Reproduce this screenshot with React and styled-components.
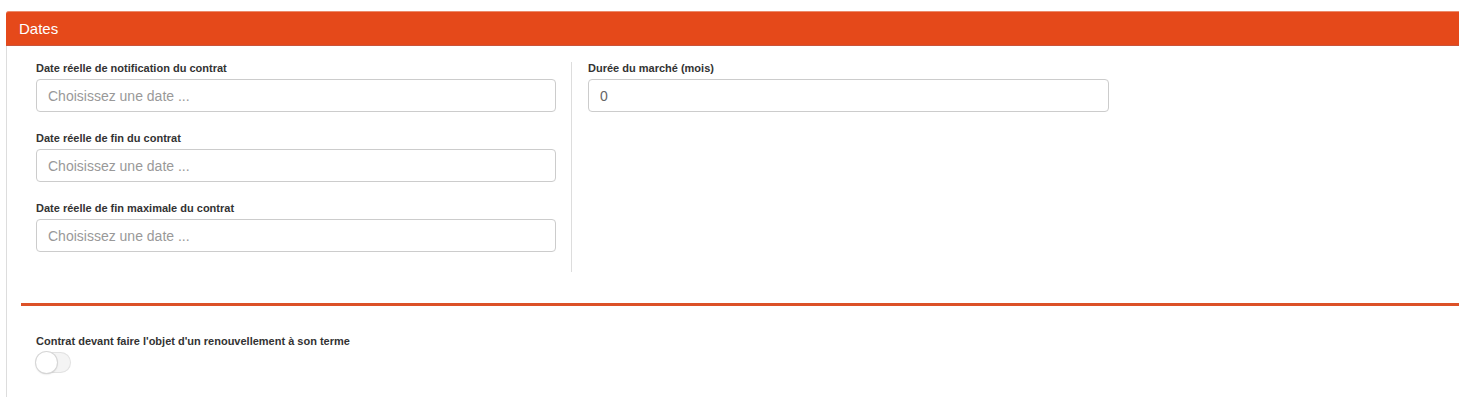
import styled, { createGlobalStyle } from 'styled-components';

const GlobalStyle = createGlobalStyle`
  html, body {
    margin: 0;
    padding: 0;
    background: #fff;
    overflow: hidden;
  }

  body {
    font-family: "Liberation Sans", Arial, sans-serif;
    color: #333;
  }
`;

const Page = styled.div`
  padding: 11px 0 0 6px;
  height: 397px;
  box-sizing: border-box;
`;

const Panel = styled.section`
  margin-right: -20px;
  height: 100%;
  border-left: 1px solid #ddd;
  border-top-left-radius: 3px;
  background: #fff;
`;

const Header = styled.header`
  height: 35px;
  display: flex;
  align-items: center;
  padding: 0 13px;
  margin-left: -1px;
  background: #e5491a;
  border-top: 1px solid #ec8a6a;
  border-bottom: 1px solid #c9543a;
  border-top-left-radius: 3px;
  box-sizing: border-box;
  color: #fff;
  font-size: 15px;
`;

const Body = styled.div`
  padding: 16px 0 0 14px;
`;

const Row = styled.div`
  display: flex;
`;

const Column = styled.div`
  width: ${(p) => p.$width}px;
  padding: 0 ${(p) => p.$gutter}px;
  border-right: ${(p) => (p.$divider ? '1px solid #ddd' : 'none')};
`;

const Group = styled.div`
  margin-bottom: 20px;
`;

const Label = styled.label`
  display: block;
  font-size: 11px;
  font-weight: 700;
  line-height: 12px;
  margin-bottom: 5px;
  color: #333;
`;

const Input = styled.input`
  display: block;
  width: 100%;
  height: 33px;
  box-sizing: border-box;
  padding: 0 11px;
  border: 1px solid #ccc;
  border-radius: 4px;
  font-family: "Liberation Sans", Arial, sans-serif;
  font-size: 14px;
  color: #666;
  outline: none;

  &::placeholder {
    color: #999;
  }
`;

const Separator = styled.hr`
  margin: 31px 0 0;
  border: 0;
  height: 3px;
  background: #dc5128;
`;

const SwitchBlock = styled.div`
  padding: 29px 15px 0;
`;

const Track = styled.span`
  display: block;
  position: relative;
  width: 35px;
  height: 21px;
  border-radius: 11px;
  background: #f4f4f4;
  box-shadow: inset 0 0 0 1px #e2e2e2;
`;

const Knob = styled.span`
  position: absolute;
  left: 0;
  top: 0;
  width: 21px;
  height: 21px;
  border-radius: 50%;
  background: #fff;
  box-shadow: 0 0 0 1px #d6d6d6, 0 1px 2px rgba(0, 0, 0, 0.25);
`;

const dateFields = [
  'Date réelle de notification du contrat',
  'Date réelle de fin du contrat',
  'Date réelle de fin maximale du contrat',
];

export default function App() {
  return (
    <>
      <GlobalStyle />
      <Page>
        <Panel>
          <Header>Dates</Header>
          <Body>
            <Row>
              <Column $width={520} $gutter={15} $divider>
                {dateFields.map((label) => (
                  <Group key={label}>
                    <Label>{label}</Label>
                    <Input type="text" placeholder="Choisissez une date ..." />
                  </Group>
                ))}
              </Column>
              <Column $width={521} $gutter={16}>
                <Group>
                  <Label>Durée du marché (mois)</Label>
                  <Input type="text" defaultValue="0" />
                </Group>
              </Column>
            </Row>
            <Separator />
            <SwitchBlock>
              <Label>Contrat devant faire l'objet d'un renouvellement à son terme</Label>
              <Track>
                <Knob />
              </Track>
            </SwitchBlock>
          </Body>
        </Panel>
      </Page>
    </>
  );
}
